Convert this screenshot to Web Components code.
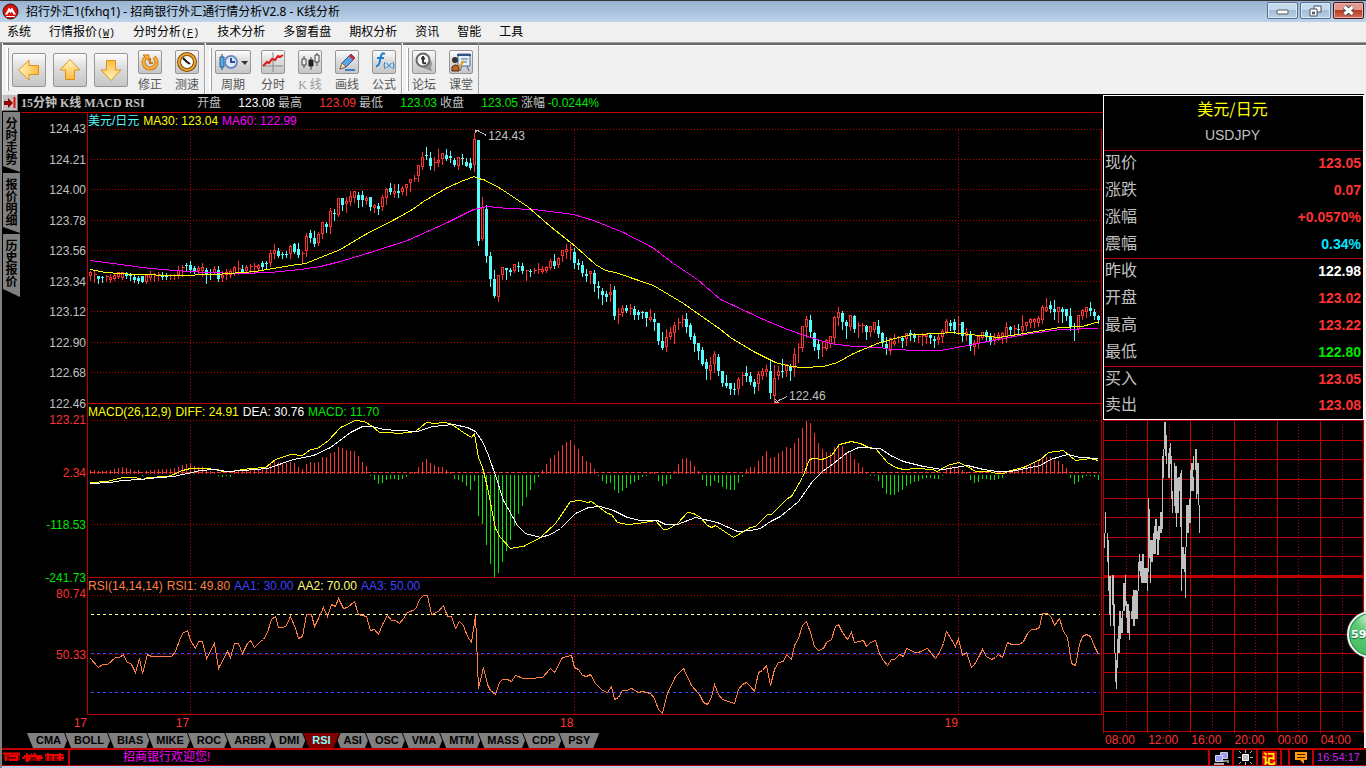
<!DOCTYPE html>
<html lang="zh-CN">
<head>
<meta charset="utf-8">
<title>招行外汇1(fxhq1) - 招商银行外汇通行情分析V2.8 - K线分析</title>
<style>
html, body { margin: 0; height: 100%; overflow: hidden; background: #000; }
body { font: 12px/16px "Liberation Sans", "Noto Sans CJK SC", sans-serif; }
</style>
</head>
<body>
<app-window></app-window>

<script>
const define = (name, html, init) => {
  const tpl = document.createElement('template');
  tpl.innerHTML = `<style>
    * { box-sizing: border-box; }
    button { font: inherit; color: inherit; border: 0; padding: 0; margin: 0; background: none; }
    svg { display: block; }
  </style>` + html;
  customElements.define(name, class extends HTMLElement {
    constructor() {
      super();
      this.attachShadow({ mode: 'open' }).append(tpl.content.cloneNode(true));
    }
    connectedCallback() { if (init) init.call(this, this.shadowRoot); }
  });
};

/* ---------- title bar ---------- */
define('title-bar', `
<style>
  :host { display: flex; align-items: center; height: 22px; padding: 0 2px; gap: 7px; border-top: 1px solid #333; background: linear-gradient(#97b2d0, #bcd3ea); font: 12px/16px "Noto Sans", "Noto Sans CJK SC", sans-serif; }
  h1 { flex: 1; margin: 0; font: inherit; color: #000; white-space: nowrap; }
  .controls { display: flex; gap: 2px; align-self: flex-start; padding-top: 1px; }
  button { width: 31px; height: 17px; border: 1px solid #55708f; border-radius: 2px; background: linear-gradient(#c5d9ec 50%, #a3bdd8 50%, #b9d0e6); display: grid; place-items: center; box-shadow: inset 0 0 0 1px #dce9f5; }
  .close { background: linear-gradient(#e2998c 45%, #b93a22 50%, #d0705a); border-color: #4b1420; box-shadow: inset 0 0 0 1px #e9b0a6; }
</style>
<svg width="17" height="17" viewBox="0 0 17 17"><circle cx="8.500" cy="8.500" r="7.500" fill="#d3150d" stroke="#3a0d0a"/><path d="M3 11.500l4-7 1.500 2 1.500-2 4 7h-2.500l-1.700-3-1.300 2-1.300-2-1.700 3z" fill="#fff"/><path d="M4 13.500h9" stroke="#fff"/></svg>
<h1>招行外汇1(fxhq1) - 招商银行外汇通行情分析V2.8 - K线分析</h1>
<div class="controls">
  <button aria-label="最小化"><svg width="13" height="9"><rect x="1" y="4" width="11" height="4" rx="1" fill="#fff" stroke="#555"/></svg></button>
  <button aria-label="还原"><svg width="13" height="12"><path d="M5 1h7v6H5z" fill="#fff" stroke="#4a4f5c"/><path d="M1 4h7v7H1z" fill="#fff" stroke="#4a4f5c"/><path d="M3.500 7h2v2h-2z" fill="#8fa9c6" stroke="#4a4f5c"/></svg></button>
  <button class="close" aria-label="关闭"><svg width="13" height="11"><path d="M2.500 2l8 7m0-7l-8 7" stroke="#4a4f5c" stroke-width="5"/><path d="M2.500 2l8 7m0-7l-8 7" stroke="#fff" stroke-width="3"/></svg></button>
</div>`);

/* ---------- menu ---------- */
define('menu-bar', `
<style>
  :host { display: block; background: #f0f0f0; color: #000; }
  nav { display: flex; gap: 18px; height: 20px; padding-left: 7px; align-items: center; }
  button { white-space: nowrap; line-height: 18px; }
  span { font: 10px "Liberation Mono", monospace; }
</style>
<nav>
  <button>系统</button><button>行情报价<span>(<u>W</u>)</span></button><button>分时分析<span>(<u>F</u>)</span></button>
  <button>技术分析</button><button>多窗看盘</button><button>期权分析</button><button>资讯</button><button>智能</button><button>工具</button>
</nav>`);

/* ---------- toolbar ---------- */
define('tool-button', `
<style>
  :host { display: block; }
  button { display: grid; justify-items: center; row-gap: 2px; width: var(--w, 24px); color: #555; white-space: nowrap; }
  .face { display: flex; align-items: center; justify-content: center; width: 100%; height: var(--h, 24px); border: 1px solid #969696; border-radius: 2px; background: linear-gradient(#fdfdfd, #dcdcdc 45%, #c6c6c6); }
  .label { line-height: 18px; }
  :host([large]) .label { display: none; }
  :host([large]) { --w: 34px; --h: 34px; }
  :host([wide]) { --w: 36px; }
  :host([dim]) .label { color: #999; font-family: "Liberation Serif", "Noto Sans CJK SC", serif; }
</style>
<button><span class="face"><slot></slot></span><span class="label"><slot name="label"></slot></span></button>`);

const arrow = r => `<svg width="24" height="24" viewBox="0 0 24 24"><defs><linearGradient id="g${r}" x2="0" y2="1"><stop stop-color="#fff6c0"/><stop offset="1" stop-color="#ffb93a"/></linearGradient></defs><path transform="rotate(${r} 12 12)" d="M12 1.500L22 12h-5.500v9.500h-9V12H2z" fill="url(#g${r})" stroke="#dc9018"/></svg>`;

define('tool-bar', `
<style>
  :host { display: flex; height: 52px; background: #f0f0f0; border-top: 1px solid #a0a0a0; }
  .group { display: flex; padding: 7px 5px 0 9px; border-right: 1px solid #a0a0a0; border-left: 1px solid #fff; position: relative; box-shadow: inset 0 2px #696969, inset 0 3px #fff; }
  .group::before { content: ""; position: absolute; left: 3px; top: 5px; bottom: 3px; width: 2px; background: #fff; border-right: 1px solid #a0a0a0; }
  .big { display: flex; gap: 7px; padding: 3px 10px 0 0; }
  .small { display: flex; gap: 13px; }
  .first { margin-right: 10px; }
  .rest { flex: 1; box-shadow: inset 0 2px #696969, inset 0 3px #fff; }
</style>
<div class="group">
  <div class="big">
    <tool-button large aria-label="后退">${arrow(-90)}</tool-button>
    <tool-button large aria-label="向上">${arrow(0)}</tool-button>
    <tool-button large aria-label="向下">${arrow(180)}</tool-button>
  </div>
  <div class="small">
    <tool-button><svg width="18" height="18"><path d="M5 4a6.500 6.500 0 1 0 8 0" fill="none" stroke="#c97c12" stroke-width="4"/><path d="M5 4a6.500 6.500 0 1 0 8 0" fill="none" stroke="#ffb347" stroke-width="2"/><path d="M2 2h6v6z" fill="#ffb347" stroke="#c97c12"/><path d="M9 5v5h3" fill="none" stroke="#c97c12" stroke-width="2"/></svg><span slot="label">修正</span></tool-button>
    <tool-button><svg width="20" height="20"><circle cx="10" cy="10" r="8" fill="#fff" stroke="#7c4a0a" stroke-width="4"/><circle cx="10" cy="10" r="8" fill="none" stroke="#f0a92c" stroke-width="2"/><path d="M6 6l4 4 3 2" fill="none" stroke="#111" stroke-width="2"/></svg><span slot="label">测速</span></tool-button>
  </div>
</div>
<div class="group">
  <tool-button wide class="first"><svg width="30" height="20"><path d="M4 2v16" stroke="#246"/><path d="M2 5h4v10H2z" fill="#5ab0e8" stroke="#24598c"/><circle cx="13" cy="10" r="6" fill="#dceafa" stroke="#6a8ec0" stroke-width="2"/><path d="M13 6v4h4" fill="none" stroke="#2a4ba0" stroke-width="2"/><path d="M23 9h7l-3 4z" fill="#333"/></svg><span slot="label">周期</span></tool-button>
  <div class="small">
    <tool-button><svg width="22" height="22"><path d="M11 1v20M1 15h20" stroke="#888"/><path d="M1 15l4-4 2 1 3-4 3 1 3-4 2 1 3-2" fill="none" stroke="#e01818" stroke-width="2"/></svg><span slot="label">分时</span></tool-button>
    <tool-button dim><svg width="20" height="20"><path d="M4 4v12M11 5v13M17 1v13" stroke="#444"/><path d="M2 7h4v6H2zM15 3h4v7h-4z" fill="#eee" stroke="#444"/><path d="M9 8h4v6H9z" fill="#222" stroke="#222"/></svg><span slot="label">K 线</span></tool-button>
    <tool-button><svg width="20" height="20"><path d="M3 17l2-6L14 2l4 4-9 9z" fill="#5fa2e6" stroke="#24598c"/><path d="M14 2l4 4-2 2-4-4z" fill="#d8232a"/><path d="M3 17l2-6 4 4z" fill="#f6dfb4" stroke="#865"/><path d="M8 18h10" stroke="#3a80c8" stroke-width="2"/></svg><span slot="label">画线</span></tool-button>
    <tool-button><svg width="22" height="22"><path d="M12 3c-3-2-4 1-4.500 4S6 16 3 15M4 7h7" fill="none" stroke="#1b7fd4" stroke-width="2"/><path d="M12 11q-2 3 0 7M20 11q2 3 0 7M13.500 12l5 5m0-5l-5 5" fill="none" stroke="#1b7fd4"/></svg><span slot="label">公式</span></tool-button>
  </div>
</div>
<div class="group"><div class="small">
    <tool-button><svg width="20" height="20"><path d="M9 16l9 3-2-5z" fill="#888"/><circle cx="13" cy="12" r="5" fill="#999"/><circle cx="9" cy="8" r="6.500" fill="#f5f5f5" stroke="#666" stroke-width="2"/><path d="M9 4v6q0 2 3 1M7 6.500h4" fill="none" stroke="#333" stroke-width="2"/></svg><span slot="label">论坛</span></tool-button>
    <tool-button><svg width="22" height="20"><path d="M8 2h12v12H8z" fill="#e6eef8" stroke="#4c6b9b"/><path d="M7 3h14" stroke="#34558a" stroke-width="2"/><path d="M11 7h7M11 10h6M12 14l-2 5m7-5l2 5" stroke="#4c6b9b"/><circle cx="5" cy="8" r="3" fill="#333"/><path d="M2 19v-4q3-4 7 0v4z" fill="#c4652a" stroke="#4d2a12"/><path d="M9 15l5-6" stroke="#e8a81c" stroke-width="2"/></svg><span slot="label">课堂</span></tool-button>
</div></div>
<div class="rest"></div>`);

/* ---------- left rail ---------- */
define('side-rail', `
<style>
  :host { display: flex; flex-direction: column; gap: 1px; background: #000; color: #000; }
  .pin { width: 16px; height: 17px; background: #c0c0c0; border: 1px solid #e8e8e8; border-right-color: #707070; border-bottom-color: #707070; }
  .tab { width: 17px; margin-left: 1px; padding: 5px 0 7px; background: #808080; writing-mode: vertical-rl; font: bold 12px/17px "Noto Sans CJK SC", sans-serif; clip-path: polygon(0 0, 100% 0, 100% 100%, 0 calc(100% - 6px)); }
  .tab:last-child { padding-bottom: 10px; clip-path: polygon(0 0, 100% 0, 100% 100%, 0 calc(100% - 8px)); }
</style>
<button class="pin" aria-label="展开"><svg width="14" height="15"><path d="M1 6h4V3l5 5-5 5v-3H1z" fill="#900000"/><path d="M11.500 2v11" stroke="#e01010" stroke-width="2"/></svg></button>
<button class="tab">分时走势</button><button class="tab">报价明细</button><button class="tab">历史报价</button>`);

/* ---------- chart header ---------- */
define('chart-header', `
<style>
  :host { display: flex; height: 19px; border-bottom: 1px solid #c00000; margin-left: 1px; color: #c0c0c0; line-height: 18px; white-space: nowrap; }
  h2 { width: 176px; margin: 0; font: bold 12px/18px "Liberation Serif", "Noto Sans CJK SC", serif; }
  dl { display: flex; gap: 3px; margin: 0; }
  dl div { display: flex; justify-content: space-between; width: 78px; }
  dd { margin: 0; }
  .r { color: #ff3232; } .g { color: #00e600; } .w { color: #fff; }
</style>
<h2>15分钟 K线 MACD RSI</h2>
<dl>
  <div><dt>开盘</dt><dd class="w">123.08</dd></div>
  <div><dt>最高</dt><dd class="r">123.09</dd></div>
  <div><dt>最低</dt><dd class="g">123.03</dd></div>
  <div><dt>收盘</dt><dd class="g">123.05</dd></div>
  <div><dt>涨幅</dt><dd class="g">-0.0244%</dd></div>
</dl>`);

/* ---------- chart data: x = 90 + 4 * index, values in plot units ---------- */
const CANDLES = `r270 272 275 279,r270 274 275 281,c275 275 278 282,c275 276 277 281,r274 276 277 280,r273 277 279 281,r272 275 278 279,r271 272 276 277,r271 272 277 278,c271 272 275 277,c272 274 275 279,c273 276 279 281,c275 277 280 282,c275 275 281 281,r275 275 281 282,r270 274 277 279,r272 275 276 280,r271 274 275 279,c271 274 276 278,c272 274 276 278,r273 275 276 278,r273 275 276 278,r265 270 274 277,r264 267 268 275,c262 264 265 269,c260 264 269 271,c265 267 271 272,r265 268 270 272,r262 267 270 275,c267 269 274 282,c268 271 272 278,r265 269 272 273,c265 269 278 280,r270 275 277 280,r268 272 274 278,r268 271 274 276,r265 267 273 274,r260 268 269 273,c264 268 271 272,r264 267 270 272,r263 266 267 271,r262 266 267 272,r263 265 268 271,c260 262 266 268,c260 262 263 268,r249 253 262 265,r243 250 253 257,c247 250 255 256,c251 253 254 257,c250 253 254 256,r244 246 253 257,c242 243 251 252,c242 248 254 256,r250 253 254 261,r232 236 250 255,c229 232 237 241,c230 237 243 245,r231 234 242 244,r222 222 233 237,c221 223 226 231,r207 211 226 232,c208 212 213 219,r197 198 214 215,c197 197 204 209,r196 201 203 211,r190 196 201 204,r191 191 197 201,c191 194 199 206,c190 194 199 205,r195 198 200 203,c196 196 206 209,r203 205 207 211,c202 205 208 213,r194 197 206 209,r187 189 197 203,c182 187 191 193,r183 191 193 196,c183 190 192 196,r185 188 191 193,r183 184 187 194,r179 179 182 190,r174 178 179 180,r165 165 175 180,r151 157 166 168,c146 154 155 158,c151 157 165 168,r156 162 163 169,r148 160 162 165,r153 153 158 163,c148 154 158 159,c150 155 157 161,c157 159 164 165,r157 157 165 168,c153 157 158 163,c157 161 165 165,c157 162 167 168,r132 139 164 170,c139 139 240 244,r196 207 238 239,c204 208 255 261,c251 255 278 285,c269 278 295 296,r274 275 296 300,r267 267 274 278,c267 267 269 278,c267 269 271 274,r264 264 270 271,c261 265 266 270,c262 265 270 272,r269 270 271 279,c268 270 271 275,r267 270 271 272,r262 269 270 272,r265 269 271 272,r265 267 270 271,r258 261 267 268,c253 260 265 267,r256 258 264 266,r249 250 255 260,r243 249 251 257,r243 249 250 258,c247 251 262 267,c258 262 264 268,c260 264 272 275,c268 273 275 280,r270 271 273 282,c269 272 283 290,c280 285 287 297,c287 290 294 303,c290 293 296 300,r283 292 294 300,c285 289 315 318,r307 314 315 322,r304 308 312 315,c304 307 310 311,r303 308 309 313,c305 308 314 318,c309 311 314 318,c310 311 312 317,c311 311 317 325,r308 317 319 320,c312 318 321 329,c322 322 340 343,c331 340 347 348,r328 337 346 350,r326 332 336 338,r321 325 332 342,r317 322 323 328,r314 319 320 325,c312 318 326 331,c322 324 336 338,c332 335 343 350,c342 342 350 358,c346 349 363 364,c358 361 368 378,r356 365 370 378,r350 354 363 371,c353 356 370 374,c370 370 382 385,c374 382 385 386,c382 382 388 393,c382 388 389 393,r376 379 388 393,r371 375 376 384,c365 372 375 380,c371 375 381 383,c378 381 386 392,r370 374 383 389,r367 371 375 378,r364 369 371 375,c358 370 392 397,r364 378 395 402,r365 371 375 378,c358 370 371 376,r363 364 370 375,c363 365 370 379,r347 354 367 375,r342 347 348 361,r325 326 347 350,r315 319 326 336,c314 319 331 335,c331 332 346 349,c339 343 349 357,r340 347 348 355,r338 340 348 349,r336 336 343 346,r315 317 337 342,r306 312 317 324,c310 312 321 328,c319 321 325 337,r315 315 326 329,c314 315 328 331,r321 325 326 336,r322 325 326 331,c324 325 331 338,r326 326 331 335,r322 322 329 331,c319 325 333 336,c331 332 342 346,c336 343 348 353,r338 338 350 353,r333 341 343 344,r335 337 338 341,c336 337 340 346,r332 333 338 344,c329 332 334 339,c332 334 337 340,r333 336 337 341,r332 335 336 344,r332 334 336 342,c333 334 337 342,c335 338 340 346,r333 337 339 343,r328 331 336 341,r318 321 331 332,c319 322 325 329,c318 321 329 332,r315 324 325 333,c321 321 335 340,r327 332 335 339,c330 333 345 349,r339 343 346 353,r335 336 343 347,r331 332 337 338,c329 331 335 340,c332 335 341 343,r332 337 339 343,r331 335 338 339,r331 333 336 342,r321 327 336 341,c325 326 329 333,r324 328 329 333,c323 328 329 332,r314 326 330 334,r321 322 325 329,r317 319 322 326,r317 319 321 326,r315 318 322 325,r304 307 319 322,r297 307 310 310,c300 304 308 311,c299 308 311 318,r307 307 311 321,c306 308 311 321,c308 308 315 319,c307 315 326 329,c322 328 329 339,r314 315 328 331,r308 310 315 318,r306 307 311 316,c301 307 310 314,c308 311 315 318,c314 315 319 322`.split(',');

const HIST = `469 469 470 470 470 469 468 467 466 467 468 470 469 474 470 469 469 468 468 468 468 467 466 464 463 462 465 466 466 469 470 471 474 475 474 475 471 470 470 468 468 467 469 468 466 462 460 461 462 462 461 462 466 468 463 461 462 461 456 456 452 451 446 447 449 450 450 455 461 465 474 478 482 481 478 477 477 478 477 475 471 471 466 461 458 462 464 466 466 469 471 477 478 480 484 488 479 514 522 543 562 577 571 560 549 538 524 512 504 495 488 481 475 469 463 457 454 450 444 441 439 444 448 455 460 462 468 474 479 482 481 488 491 489 486 482 480 478 475 474 471 471 479 484 482 477 470 463 458 457 460 465 470 478 484 484 479 481 485 487 488 488 481 475 468 466 466 460 455 450 457 456 452 450 446 447 442 437 427 420 422 432 442 448 451 452 446 443 445 451 452 458 462 466 471 474 474 479 486 492 493 493 490 488 484 482 480 479 477 476 476 477 477 474 468 465 466 465 469 471 478 481 480 477 477 478 478 477 476 471 469 468 467 466 464 463 462 460 456 456 456 459 460 463 467 476 482 480 476 474 474 475 478`.split(' ').map(Number);

const MA30 = '90,269 105,272 135,274 175,275 215,274 255,271 290,265 305,263 320,257 340,249 363,235 398,217 412,209 423,201 447,187 463,180 474,176 477,178 483,179 500,188 527,206 550,226 575,246 595,264 605,270 615,272 653,285 683,303 720,329 730,337 753,351 775,362 790,366 802,367 823,366 837,362 853,353 877,343 898,337 913,334 940,333 950,332 970,334 998,337 1030,332 1060,327 1082,326 1099,321';
const MA60 = '90,260 120,264 150,268 175,270 205,272 240,273 270,272 300,269 320,266 340,261 373,251 407,240 427,231 447,222 473,209 487,206 507,208 533,209 573,214 593,220 623,232 652,247 673,263 697,279 720,299 733,305 763,319 787,329 807,336 830,343 853,346 880,347 890,349 920,350 940,350 967,345 1003,338 1030,333 1060,329 1098,328';
const DIFF = '90,482 107,481 122,477 135,477 142,479 147,477 167,476 173,474 182,470 190,468 203,468 217,469 222,471 230,471 250,468 265,467 275,459 290,454 302,455 310,449 317,448 328,440 340,427 355,420 364,421 372,426 379,432 388,432 398,433 408,432 415,431 426,422 435,423 442,422 450,423 463,432 471,437 474,433 478,457 482,467 487,487 495,528 500,537 510,548 515,547 523,546 540,537 555,523 570,501 580,500 587,502 591,501 607,513 611,514 617,522 627,524 638,523 655,520 663,529 667,529 677,523 687,512 693,513 700,517 707,525 711,527 715,525 733,537 750,527 755,526 767,514 771,514 787,498 791,496 802,477 809,459 813,458 822,459 831,455 839,444 847,442 851,441 855,442 860,443 868,447 875,448 887,462 895,467 903,469 917,468 932,469 937,471 947,465 958,462 967,466 975,471 988,471 997,473 1003,473 1010,470 1023,467 1040,459 1048,452 1063,450 1075,460 1090,458 1098,460';
const DEA = '90,483 110,482 122,480 140,479 142,479 147,478 173,476 187,473 200,470 213,469 227,471 243,470 267,468 293,459 313,455 330,447 350,432 362,426 372,426 383,429 398,430 417,431 432,426 453,424 467,427 475,431 482,441 488,455 495,475 503,500 517,525 525,533 540,537 550,534 560,528 575,513 588,507 600,506 613,510 627,517 640,520 657,520 665,524 677,524 695,517 717,522 737,531 750,530 760,528 770,521 780,516 798,501 812,481 822,471 833,463 847,452 858,447 880,448 890,455 903,461 923,466 942,469 967,465 983,469 997,471 1010,471 1040,465 1050,459 1067,454 1080,457 1098,458';
const RSI = '90,658 98,667 102,664 107,664 115,657 119,657 123,654 126,661 131,664 135,672 139,658 142,673 147,654 151,656 171,656 175,651 179,640 182,633 187,630 190,640 195,648 198,641 202,641 206,658 214,643 218,668 227,651 230,657 234,643 238,643 242,653 247,643 250,640 254,647 260,641 263,639 267,632 271,619 275,616 278,627 283,627 286,625 290,616 295,628 298,638 302,636 306,614 311,614 314,626 318,618 323,607 327,616 331,604 335,606 338,598 343,608 347,607 354,601 358,614 366,616 370,630 374,629 378,634 382,624 387,615 391,620 395,620 399,623 403,618 407,612 415,609 419,599 423,595 427,595 431,614 438,611 443,605 447,616 451,616 455,628 459,621 463,625 467,636 471,642 475,615 478,688 483,667 487,684 490,690 495,694 499,682 502,679 507,679 511,681 515,675 523,678 530,678 542,677 550,668 554,672 562,657 571,655 574,667 578,669 582,675 586,676 590,674 595,683 602,690 607,692 611,686 614,699 618,697 622,690 626,690 631,688 638,692 642,691 650,693 654,698 658,709 662,713 667,693 675,676 683,668 691,685 699,694 703,702 707,704 711,697 714,684 718,694 722,699 734,703 738,689 742,684 746,682 750,686 754,691 758,672 762,670 766,665 770,685 774,669 778,662 783,661 786,654 791,659 794,645 798,638 802,625 806,621 810,632 814,646 818,650 823,648 826,642 831,639 835,626 838,624 842,632 847,639 851,632 854,642 863,640 866,646 870,642 875,640 879,653 883,660 887,665 891,659 894,659 899,654 903,656 906,648 915,652 918,652 927,648 931,653 935,658 939,652 943,643 946,631 951,639 955,646 958,638 962,655 966,652 971,667 974,664 978,657 982,649 986,656 991,659 995,657 998,654 1002,657 1007,642 1011,644 1019,644 1023,641 1027,633 1031,629 1035,629 1039,627 1042,613 1047,613 1051,617 1054,625 1059,618 1063,631 1067,637 1071,663 1075,665 1079,644 1082,636 1086,634 1090,636 1094,646 1098,654';

const hline = (y, c, dash, x1 = 90, x2 = 1099) => `<path d="M${x1} ${y}H${x2}" stroke="${c}"${dash ? ` stroke-dasharray="${dash}"` : ''}/>`;
const line = (pts, c) => `<polyline points="${pts}" stroke="${c}"/>`;
const days = (y1, y2) => [190, 574, 958].map(x => `<path d="M${x} ${y1}V${y2}" stroke="#c00000" stroke-dasharray="1 2"/>`).join('');

const plots = {
  price() {
    return [129, 159, 189, 220, 250, 281, 311, 342, 372].map(y => hline(y, '#c00000', '1 2')).join('') + days(129, 403) +
      CANDLES.map((s, i) => {
        const x = 90 + 4 * i, [h, t, b, l] = s.slice(1).split(' ').map(Number), flat = b - t < 2;
        if (s[0] === 'c') return `<path d="M${x} ${h}V${l + 1}" stroke="#54fcfc"/><path d="M${x} ${t}V${b}" stroke="#54fcfc" stroke-width="3"/>`;
        return `<path d="M${x} ${h}V${l + 1}" stroke="#ff3232"/>` + (flat ? `<path d="M${x - 1} ${t}h3" stroke="#ff3232"/>` : `<rect x="${x - 1}" y="${t}" width="2" height="${b - t}" fill="#000" stroke="#ff3232"/>`);
      }).join('') + line(MA60, '#ff00ff') + line(MA30, '#ffff00') +
      '<path d="M474 130h3M474 131h2M474 132h1M477 130l9 5" stroke="#c0c0c0"/><path d="M775 400v2h3l-3-3M778 400l9-4" stroke="#c0c0c0"/>';
  },
  macd() {
    return [420, 524].map(y => hline(y, '#c00000', '1 2')).join('') + days(420, 577) + hline(472, '#ff3232', '4 2') +
      HIST.map((v, i) => { const x = 90 + 4 * i; return v > 472 ? `<path d="M${x} 474V${v + 1}" stroke="#00e600"/>` : `<path d="M${x} 473V${v}" stroke="#ff3232"/>`; }).join('') +
      line(DIFF, '#ffff00') + line(DEA, '#ffffff');
  },
  rsi() {
    return [595, 654].map(y => hline(y, '#c00000', '1 2')).join('') + days(595, 714) +
      hline(614, '#ffff80', '3 3') + hline(653, '#4040ff', '3 3') + hline(692, '#4040ff', '3 3') + line(RSI, '#ff8040');
  }
};

/* ---------- one indicator panel: axis labels, legend, plot ---------- */
define('chart-panel', `
<style>
  :host { display: grid; grid-template-columns: 67px minmax(0, 1fr); grid-template-rows: var(--legend, 16px) minmax(0, 1fr); padding-right: 1px; min-height: 0; }
  .axis { grid-row: 1 / 3; display: flex; flex-direction: column; justify-content: space-between; align-items: flex-end; margin: 7px 1px -9px 0; line-height: 18px; }
  .legend { display: flex; gap: 4px; border-left: 1px solid #c00000; border-right: 1px solid #c00000; white-space: nowrap; }
  :host([kind=price]) .legend { border-right-color: transparent; }
  .plot { position: relative; min-height: 0; border: solid #c00000; border-width: 0 1px 1px; }
  svg { width: 100%; height: 100%; fill: none; shape-rendering: crispEdges; }
  ::slotted(.high), ::slotted(.low) { position: absolute; line-height: 14px; color: #c0c0c0; }
  ::slotted(.high) { left: 39.500%; top: 0; }
  ::slotted(.low) { left: 69.200%; bottom: 0; }
  ::slotted(.blank) { visibility: hidden; height: 18px; }
</style>
<div class="axis"><slot name="axis"></slot></div>
<div class="legend"><slot></slot></div>
<div class="plot"><svg preserveAspectRatio="none" aria-hidden="true"></svg><slot name="mark"></slot></div>`,
function (root) {
  const svg = root.querySelector('svg');
  const [y, h] = { price: [129, 274], macd: [420, 157], rsi: [595, 119] }[this.getAttribute('kind')];
  svg.setAttribute('viewBox', `${88 - .5} ${y - .5} 1013 ${h}`);
  svg.innerHTML = plots[this.getAttribute('kind')]();
});

const axis = (vals, colors) => vals.map((v, i) => `<span slot="axis" style="color:${colors[i] || colors[0]}">${v}</span>`).join('');
const legend = items => items.map(([c, t]) => `<span style="color:${c}">${t}</span>`).join('');

define('chart-area', `
<style>
  :host { display: grid; grid-template-rows: 19px minmax(0, 291fr) minmax(0, 174fr) minmax(0, 137fr) 18px 15px; background: #000; min-height: 0; min-width: 0; }
  .rsi { --legend: 17px; }
  .dates { display: grid; grid-template-columns: 67px 102fr 384fr 384fr 145fr; text-align: right; line-height: 16px; color: #ff3232; }
</style>
<chart-header></chart-header>
<chart-panel kind="price">
  ${axis(['124.43', '124.21', '124.00', '123.78', '123.56', '123.34', '123.12', '122.90', '122.68', '122.46'], ['#c0c0c0'])}
  ${legend([['#54fcfc', '美元/日元'], ['#ffff00', 'MA30: 123.04'], ['#ff00ff', 'MA60: 122.99']])}
  <span slot="mark" class="high">124.43</span><span slot="mark" class="low">122.46</span>
</chart-panel>
<chart-panel kind="macd">
  ${axis(['123.21', '2.34', '-118.53', '-241.73'], ['#ff3232', '#ff3232', '#00e600', '#00e600'])}
  ${legend([['#ffff00', 'MACD(26,12,9)'], ['#ffff00', 'DIFF: 24.91'], ['#ffffff', 'DEA: 30.76'], ['#00e600', 'MACD: 11.70']])}
</chart-panel>
<chart-panel kind="rsi" class="rsi">
  ${axis(['80.74', '50.33'], ['#ff3232'])}<span slot="axis" class="blank"></span>
  ${legend([['#ff8040', 'RSI(14,14,14)'], ['#ff8040', 'RSI1: 49.80'], ['#4040ff', 'AA1: 30.00'], ['#ffff80', 'AA2: 70.00'], ['#4040ff', 'AA3: 50.00']])}
</chart-panel>
<div class="dates"><span>17</span><span>17</span><span>18</span><span>19</span></div>
<indicator-tabs></indicator-tabs>`);

define('indicator-tabs', `
<style>
  :host { display: flex; padding-left: 6px; font: bold 11px/15px "Liberation Sans", sans-serif; color: #000; }
  button { position: relative; height: 15px; padding: 0 10px; margin-right: -7px; background: #000; clip-path: polygon(0 0, 100% 0, calc(100% - 6px) 100%, 6px 100%); }
  button::before { content: ""; position: absolute; inset: 0; background: #808080; clip-path: polygon(1px 0, calc(100% - 1px) 0, calc(100% - 7px) 100%, 7px 100%); }
  span { position: relative; }
  .on { z-index: 1; color: #80ffff; }
  .on::before { background: #800000; }
</style>
${['CMA', 'BOLL', 'BIAS', 'MIKE', 'ROC', 'ARBR', 'DMI', 'RSI', 'ASI', 'OSC', 'VMA', 'MTM', 'MASS', 'CDP', 'PSY'].map(t => `<button${t === 'RSI' ? ' class="on"' : ''}><span>${t}</span></button>`).join('')}`);

/* ---------- quote table ---------- */
const quotes = [
  [['现价', '123.05', 'r'], ['涨跌', '0.07', 'r'], ['涨幅', '+0.0570%', 'r'], ['震幅', '0.34%', 'c']],
  [['昨收', '122.98', 'w'], ['开盘', '123.02', 'r'], ['最高', '123.22', 'r'], ['最低', '122.80', 'g']],
  [['买入', '123.05', 'r'], ['卖出', '123.08', 'r']]
];
define('quote-panel', `
<style>
  :host { display: block; border: 1px solid #fff; margin-top: 1px; background: #000; color: #c0c0c0; }
  header { text-align: center; border-bottom: 1px solid #c00000; height: 55px; padding-right: 2px; }
  h2 { margin: 0; font: 16px/25px "Noto Sans CJK SC", sans-serif; color: #ff0; }
  p { margin: 0; font: 14px/29px "Liberation Sans", sans-serif; }
  table { width: 100%; border-collapse: separate; border-spacing: 0; }
  th, td { height: 27px; padding: 0 2px 3px 1px; line-height: 22px; }
  th { text-align: left; font-weight: normal; font-size: 16px; }
  td { text-align: right; font-weight: bold; font-size: 14px; }
  tbody:not(:last-child) tr:last-child > * { border-bottom: 1px solid #c00000; padding-bottom: 2px; }
  tbody:last-child tr > * { height: 26px; padding-bottom: 2px; }
  .r { color: #ff3232; } .g { color: #00e600; } .c { color: #00e6ff; } .w { color: #fff; }
</style>
<header><h2>美元/日元</h2><p>USDJPY</p></header>
<table>${quotes.map(g => `<tbody>${g.map(([k, v, c]) => `<tr><th scope="row">${k}</th><td class="${c}">${v}</td></tr>`).join('')}</tbody>`).join('')}</table>`);

/* ---------- intraday chart ---------- */
const TICKS = '14 350 395,17 289 350,21 350 437,25 372 525,29 480 597,31 540 630,36 477 567,40 565 630,43 565 712,47 712 797,49 733 819,52 668 755,55 630 712,59 585 670,65 605 650,68 585 650,71 500 585,74 500 570,76 477 565,80 555 605,83 565 650,88 585 672,93 585 608,96 540 608,100 522 630,105 522 608,109 545 608,113 525 587,116 437 525,118 414 465,121 435 480,125 457 500,128 414 500,132 457 500,138 457 500,142 457 525,145 246 467,148 280 425,151 372 500,154 372 437,160 350 414,164 330 414,167 310 370,172 345 416,176 330 372,181 289 352,185 289 340,188 121 330,190 100 185,194 18 100,197 90 120,200 57 145,204 110 185,208 97 145,212 80 130,214 121 250,218 225 292,222 205 270,224 141 248,227 150 290,229 163 332,233 185 290,236 184 225,240 172 250,242 172 332,244 163 525,248 392 460,252 415 467,256 392 545,260 268 392,263 268 352,267 248 320,271 163 310,274 141 225,278 183 225,281 120 163,285 100 163,289 121 248,292 141 235,295 141 268,298 268 352';
const FAT = new Set([29, 36, 55, 59, 65, 71, 74, 83, 93, 96, 100, 105, 109, 121, 125, 128, 132, 138, 154, 160, 164, 167, 172, 176, 181, 185, 194, 204, 208, 222, 227, 233, 236, 240, 248, 252, 263, 267, 274, 278, 285, 292]);
define('intraday-chart', `
<style>
  :host { display: grid; grid-template-rows: minmax(0, 1fr) 15px; background: #000; min-height: 0; }
  svg { width: 100%; height: 100%; fill: none; shape-rendering: crispEdges; }
  .times { display: grid; grid-template-columns: repeat(6, 1fr); padding-left: 2px; color: #ff3232; line-height: 15px; white-space: nowrap; }
</style>
<svg preserveAspectRatio="none" viewBox="1102.5 419.5 261 313" aria-hidden="true">
  <g stroke="#c00000">
    ${[420, 440, 459, 479, 498, 517, 537, 556, 595, 614, 634, 653, 672, 692, 711, 731].map(y => `<path d="M1103 ${y}H1364"/>`).join('')}
    <path d="M1103 576H1364" stroke-width="3"/>
    ${[1103, 1147, 1190, 1234, 1277, 1320, 1363].map(x => `<path d="M${x} 420V734"/>`).join('')}
    ${[1126, 1169, 1212, 1255, 1298, 1342].map(x => `<path d="M${x} 423V730" stroke-dasharray="1 2"/>`).join('')}
  </g>
  <g stroke="#c0c0c0">${TICKS.split(',').map(t => { const [x, a, b] = t.split(' ').map(Number); return `<path d="M${1100 + Math.floor(x / 3)} ${415 + Math.round(a / 3)}V${415 + Math.round(b / 3)}"${FAT.has(x) ? ' stroke-width="2"' : ''}/>`; }).join('')}</g>
</svg>
<div class="times"><span>08:00</span><span>12:00</span><span>16:00</span><span>20:00</span><span>00:00</span><span>04:00</span></div>`);

/* ---------- status bar ---------- */
define('status-bar', `
<style>
  :host { display: block; background: #b9d1ea; padding-bottom: 2px; }
  .bar { display: flex; height: 18px; border: solid #c00000; border-width: 2px 0 1px; background: #000; line-height: 15px; }
  .tag { width: 68px; border-right: 2px solid #c00000; }
  .msg { flex: 1; padding-left: 53px; color: #f0f; }
  .cell { display: grid; place-items: center; width: 24px; border-left: 2px solid #c00000; }
  .thin { width: 8px; }
  .time { width: 54px; font-size: 11px; color: #d020f0; padding-right: 3px; }
  .memo { font: bold 13px/13px "Noto Sans CJK SC", sans-serif; color: #ff0; background: #e00000; width: 15px; height: 14px; text-align: center; }
</style>
<div class="bar">
  <div class="tag"><svg width="66" height="15"><path d="M1 3h17v7H2zM22 5h18v6H23zM43 4h19v7H43z" fill="#700"/><path d="M1 3.500h17M4 5v6M7 6h8v4M7 10h9M22 6h18M25 3v9M30 4l-4 7M32 3l5 8M34 8h7M43 5h18M46 3v8M51 4v7M55 8h7M58 3v8M20 8h3" fill="none" stroke="#f00000" stroke-width="2"/></svg></div>
  <div class="msg">招商银行欢迎您!</div>
  <div class="cell"><svg width="15" height="14"><path d="M6.500 1.500h7v6h-7z" fill="#99f" stroke="#ccc"/><path d="M5 10h9v2" stroke="#888" stroke-width="2" fill="none"/><path d="M1.500 4.500h7v6h-7z" fill="#99f" stroke="#ddd"/><path d="M0 13h10" stroke="#aaa" stroke-width="2"/></svg></div>
  <div class="cell"><svg width="15" height="15"><path d="M4.500 4.500h6v6h-6z" fill="#c0c0c0" stroke="#fff"/><path d="M7.500 0v3m0 9v3M0 7.500h3m9 0h3M1 1l2 2m9 9l2 2M14 1l-2 2M3 12l-2 2" stroke="#c0c0c0"/></svg></div>
  <div class="cell"><span class="memo">记</span></div>
  <div class="cell thin"></div>
  <div class="cell"><svg width="12" height="12"><path d="M0 0h12v8H9v4L5 8H0z" fill="#ff9a10"/><path d="M2 2.500h8M2 5.500h8" stroke="#402000"/></svg></div>
  <div class="cell time">16:54:17</div>
</div>`);

define('float-ball', `
<style>
  :host { display: block; }
  button { width: 47px; height: 47px; border-radius: 50%; border: 2px solid #f4f4f4; box-shadow: 0 0 2px #666, inset 0 0 0 1px #1d8a48; background: radial-gradient(circle at 50% 10%, #d8f5d8, #5fc876 35%, #3fbb58); color: #fff; text-align: left; padding-left: 2px; font: bold 11px/16px "DejaVu Sans", sans-serif; text-shadow: 0 1px 1px #164; }
</style>
<button>59</button>`);

define('app-window', `
<style>
  :host { position: relative; display: grid; grid-template-rows: 22px 20px 52px minmax(480px, 1fr) 20px; min-height: 100vh; overflow: hidden; }
  tool-bar, main, status-bar { border-left: 2px solid #808080; }
  main { display: grid; grid-template-columns: 18px minmax(0, 1fr) 261px; padding-right: 2px; background: linear-gradient(to left, #f0f0f0 2px, #000 2px); min-height: 0; }
  .right { display: grid; grid-template-rows: auto minmax(0, 1fr); min-height: 0; }
  float-ball { position: absolute; right: -28px; bottom: 110px; }
</style>
<title-bar></title-bar>
<menu-bar></menu-bar>
<tool-bar></tool-bar>
<main>
  <side-rail></side-rail>
  <chart-area></chart-area>
  <div class="right"><quote-panel></quote-panel><intraday-chart></intraday-chart></div>
</main>
<status-bar></status-bar>
<float-ball></float-ball>`);
</script>
</body>
</html>
